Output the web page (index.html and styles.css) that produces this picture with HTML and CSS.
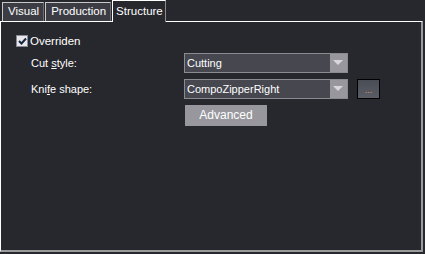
FILE: index.html
```html
<!DOCTYPE html>
<html lang="en">
<head>
    <meta charset="UTF-8">
    <title>Structure</title>
    <link rel="stylesheet" href="styles.css">
</head>
<body>
<div class="tabs">
    <div class="tab">Visual</div>
    <div class="tab">Production</div>
    <div class="tab active">Structure</div>
</div>
<div class="panel">
    <label class="check">
        <span class="box">
            <svg width="9" height="8" viewBox="0 0 9 8">
                <path d="M1 4 L3.5 6.5 L8 1.5" fill="none" stroke="#14243c" stroke-width="2"/>
            </svg>
        </span>
        Overriden
    </label>
    <div class="form">
        <div class="lbl">Cut <u>s</u>tyle:</div>
        <div class="combo">
            <span class="value">Cutting</span>
            <span class="arrow"></span>
        </div>
        <div></div>
        <div class="lbl">Kni<u>f</u>e shape:</div>
        <div class="combo">
            <span class="value">CompoZipperRight</span>
            <span class="arrow"></span>
        </div>
        <div class="dots"><span>...</span></div>
        <div></div>
        <div><button class="btn">Advanced</button></div>
    </div>
</div>
</body>
</html>
```

FILE: styles.css
```css
* {
    padding: 0;
    margin: 0;
    box-sizing: border-box;
}
body {
    width: 425px;
    height: 254px;
    background: #27282d;
    font-family: "Liberation Sans", Arial, sans-serif;
    font-size: 11px;
    color: #ffffff;
    overflow: hidden;
}
.tabs {
    display: flex;
    height: 21px;
    padding-left: 2px;
    align-items: flex-end;
}
.tab {
    height: 19px;
    padding: 2px 4px 0 5px;
    margin-right: 1px;
    background: #3c3d44;
    border: 1px solid #c8c8c8;
    border-right-color: #6e6e6e;
    border-bottom: none;
    font-size: 11.5px;
}
.tab.active {
    height: 22px;
    margin-bottom: -1px;
    padding: 4px 2px 0 3px;
    background: #27282d;
    border-color: #ffffff;
    border-right-color: #8c8c8c;
    position: relative;
    z-index: 1;
}
.panel {
    width: 423px;
    height: 231px;
    border: 1px solid #ffffff;
    border-right: 2px solid #9a9a9a;
    border-bottom: 2px solid #9a9a9a;
    padding: 12px 0 0 15px;
}
.check {
    display: flex;
    align-items: center;
    gap: 2px;
    height: 13px;
    font-size: 11.5px;
}
.box {
    width: 12px;
    height: 12px;
    background: #e8e8ec;
    border: 1px solid #8a8a96;
    display: flex;
    align-items: center;
    justify-content: center;
}
.form {
    display: grid;
    grid-template-columns: 153px 164px 32px;
    grid-auto-rows: 20px;
    row-gap: 6px;
    margin-top: 6px;
    padding-left: 15px;
    align-items: center;
}
.lbl u {
    text-decoration: underline;
}
.combo {
    height: 20px;
    display: flex;
    border: 1px solid #8a8a90;
    background: #46474f;
}
.combo .value {
    flex: 1;
    padding: 3px 0 0 2px;
}
.combo .arrow {
    width: 17px;
    background: #97979d;
    position: relative;
}
.combo .arrow::after {
    content: "";
    position: absolute;
    left: 3px;
    top: 6px;
    border-left: 5px solid transparent;
    border-right: 5px solid transparent;
    border-top: 5px solid #d8d8dc;
}
.dots {
    margin-left: 9px;
    width: 23px;
    height: 20px;
    border: 1px solid #000000;
    background: linear-gradient(#4a4c56, #5a5c66);
    color: #e0a060;
    font-size: 9px;
    text-align: center;
    padding-top: 5px;
}
.btn {
    width: 82px;
    height: 21px;
    margin-left: 1px;
    background: #97979d;
    border: none;
    color: #ffffff;
    font-family: "Liberation Sans", Arial, sans-serif;
    font-size: 12px;
}
```
